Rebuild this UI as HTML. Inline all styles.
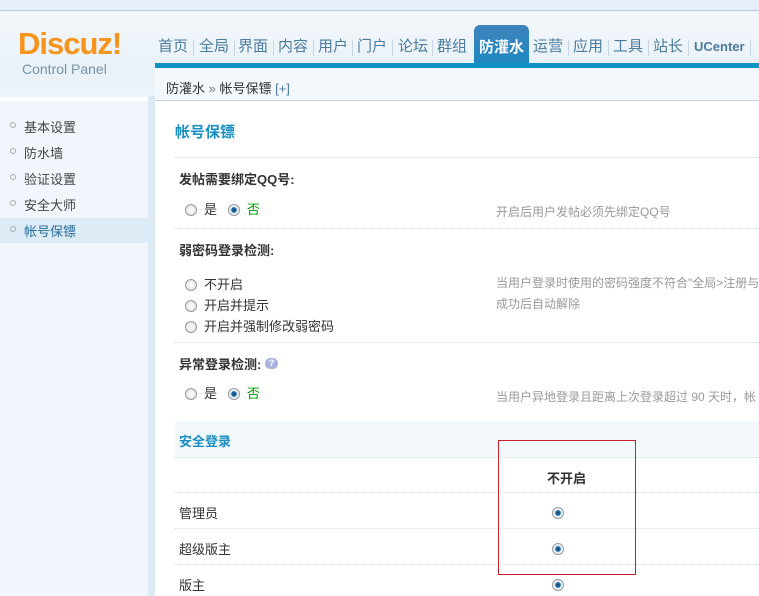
<!DOCTYPE html>
<html><head><meta charset="utf-8"><style>
*{margin:0;padding:0;box-sizing:border-box}
body{width:759px;height:596px;overflow:hidden;background:#fff;font:12px "Liberation Sans","Noto Sans CJK SC",sans-serif;color:#333;position:relative}
.a{position:absolute;white-space:nowrap}
.top{left:0;top:0;width:759px;height:11px;background:#e6eef7;border-bottom:1px solid #b9c8d8}
.hdr{left:0;top:11px;width:759px;height:86px;background:linear-gradient(#f3f7fb,#e8f1f8 60px,#eef5fa)}
.logo{left:18px;top:26px;font:bold 31px "Liberation Sans",sans-serif;color:#f7941d;letter-spacing:-1px}
.cp{left:22px;top:61px;font-size:14px;color:#7a93a6}
.nav{top:37px;font-size:15px;color:#4b7b9e;height:20px;line-height:20px;width:30px;text-align:center}
.sp{top:40px;height:16px;width:1px;background:#c9d6e2}
.tab{left:474px;top:25px;width:55px;height:43px;border-radius:6px 6px 0 0;background:linear-gradient(#3f82bb,#1a8ac2);color:#fff;font-size:15px;font-weight:bold;text-align:center;line-height:45px}
.bar{left:155px;top:63px;width:604px;height:5px;background:#0f92c4}
.bc{left:155px;top:68px;width:604px;height:33px;background:#f3f8fc;border-bottom:1px solid #c9d6e2}
.side{left:0;top:101px;width:148px;height:495px;background:#f0f6fb}
.sb{left:148px;top:96px;width:7px;height:500px;background:#dceaf5}
.mi{left:10px;font-size:13px;color:#444}
.mi i{display:inline-block;width:6px;height:6px;border:1px solid #aaa;border-radius:50%;margin-right:8px;vertical-align:4px}
.dl{left:175px;width:584px;border-top:1px dotted #d4dde5}
.lab{left:179px;font-weight:bold;font-size:13px;color:#333}
.r{display:inline-block;width:12px;height:12px;border-radius:50%;border:1px solid #999;background:radial-gradient(#fff,#ddd);vertical-align:-2px;margin-right:7px}
.r.on{background:radial-gradient(circle,#0a3f6b 0,#2a78b4 35%,#dfe8ef 45%,#fff 80%)}
.tip{left:496px;color:#999}
.t13{font-size:13px}
</style></head><body>
<div class="a top"></div>
<div class="a hdr"></div>
<div class="a logo">Discuz!</div>
<div class="a cp">Control Panel</div>
<div class="a nav" style="left:158px">首页</div><div class="a sp" style="left:193px"></div>
<div class="a nav" style="left:199px">全局</div><div class="a sp" style="left:234px"></div>
<div class="a nav" style="left:238px">界面</div><div class="a sp" style="left:273px"></div>
<div class="a nav" style="left:278px">内容</div><div class="a sp" style="left:313px"></div>
<div class="a nav" style="left:318px">用户</div><div class="a sp" style="left:352px"></div>
<div class="a nav" style="left:357px">门户</div><div class="a sp" style="left:392px"></div>
<div class="a nav" style="left:398px">论坛</div><div class="a sp" style="left:432px"></div>
<div class="a nav" style="left:437px">群组</div>
<div class="a tab">防灌水</div>
<div class="a nav" style="left:533px">运营</div><div class="a sp" style="left:568px"></div>
<div class="a nav" style="left:573px">应用</div><div class="a sp" style="left:608px"></div>
<div class="a nav" style="left:613px">工具</div><div class="a sp" style="left:648px"></div>
<div class="a nav" style="left:653px">站长</div><div class="a sp" style="left:688px"></div>
<div class="a nav" style="left:694px;width:auto;font-size:13px;font-weight:bold">UCenter</div><div class="a sp" style="left:750px"></div>
<div class="a bar"></div>
<div class="a bc"></div>
<div class="a t13" style="left:166px;top:78px;color:#333">防灌水 <span style="color:#777">»</span> 帐号保镖 <span style="color:#4b7b9e">[+]</span></div>
<div class="a side"></div>
<div class="a" style="left:0;top:218px;width:148px;height:25px;background:#dcebf6"></div>
<div class="a sb"></div>
<div class="a mi" style="top:117px"><i></i>基本设置</div>
<div class="a mi" style="top:143px"><i></i>防水墙</div>
<div class="a mi" style="top:169px"><i></i>验证设置</div>
<div class="a mi" style="top:195px"><i></i>安全大师</div>
<div class="a mi" style="top:221px;color:#2a6e9e"><i></i>帐号保镖</div>

<div class="a" style="left:175px;top:121px;font-size:15px;font-weight:bold;color:#1a8fc2">帐号保镖</div>
<div class="a dl" style="top:157px"></div>
<div class="a lab" style="top:169px">发帖需要绑定QQ号:</div>
<div class="a t13" style="left:185px;top:199px"><span class="r"></span>是 &nbsp;&nbsp;<span class="r on"></span><span style="color:#090">否</span></div>
<div class="a tip" style="top:203px">开启后用户发帖必须先绑定QQ号</div>
<div class="a dl" style="top:228px"></div>
<div class="a lab" style="top:240px">弱密码登录检测:</div>
<div class="a t13" style="left:185px;top:274px"><span class="r"></span>不开启</div>
<div class="a t13" style="left:185px;top:295px"><span class="r"></span>开启并提示</div>
<div class="a t13" style="left:185px;top:316px"><span class="r"></span>开启并强制修改弱密码</div>
<div class="a tip" style="top:274px">当用户登录时使用的密码强度不符合"全局&gt;注册与</div>
<div class="a tip" style="top:295px">成功后自动解除</div>
<div class="a dl" style="top:342px"></div>
<div class="a lab" style="top:354px">异常登录检测: <span style="display:inline-block;width:13px;height:11px;border-radius:5px;background:#a9b3dd;color:#fff;font-size:9px;text-align:center;line-height:11px;vertical-align:3px">?</span></div>
<div class="a t13" style="left:185px;top:383px"><span class="r"></span>是 &nbsp;&nbsp;<span class="r on"></span><span style="color:#090">否</span></div>
<div class="a tip" style="top:388px">当用户异地登录且距离上次登录超过 90 天时，帐</div>
<div class="a" style="left:175px;top:421px;width:584px;height:36px;background:#f2f8fc"></div>
<div class="a" style="left:179px;top:431px;font-size:13px;font-weight:bold;color:#1a8fc2">安全登录</div>
<div class="a dl" style="top:457px"></div>
<div class="a" style="left:547px;top:468px;font-weight:bold;font-size:13px">不开启</div>
<div class="a dl" style="top:492px"></div>
<div class="a t13" style="left:179px;top:503px">管理员</div>
<div class="a dl" style="top:528px"></div>
<div class="a t13" style="left:179px;top:539px">超级版主</div>
<div class="a dl" style="top:564px"></div>
<div class="a t13" style="left:179px;top:575px">版主</div>
<div class="a" style="left:552px;top:506px"><span class="r on"></span></div>
<div class="a" style="left:552px;top:542px"><span class="r on"></span></div>
<div class="a" style="left:552px;top:578px"><span class="r on"></span></div>
<div class="a" style="left:498px;top:440px;width:138px;height:135px;border:1px solid #c8202a"></div>
</body></html>
